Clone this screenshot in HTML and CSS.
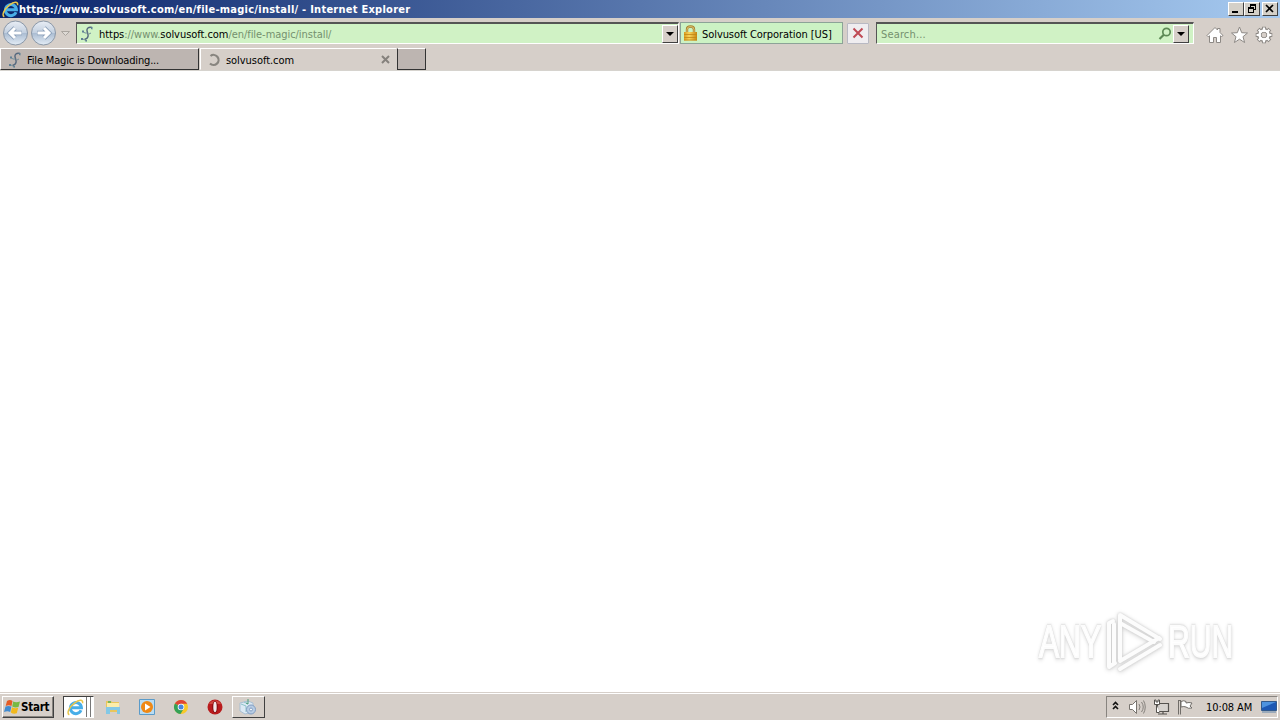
FILE: index.html
```html
<!DOCTYPE html>
<html lang="en">

<head>
    <meta charset="UTF-8">
    <title>https://www.solvusoft.com/en/file-magic/install/</title>
    <link rel="stylesheet" href="styles.css">
</head>

<body>

    <!-- shapes used more than once -->
    <svg class="defs" width="0" height="0">
        <defs>
            <linearGradient id="ball" x1="0" y1="0" x2="0" y2="1">
                <stop offset="0" stop-color="#e9eef5" />
                <stop offset=".48" stop-color="#c3d0e0" />
                <stop offset=".5" stop-color="#a9bbd1" />
                <stop offset="1" stop-color="#e4edf6" />
            </linearGradient>
            <linearGradient id="gold" x1="0" y1="0" x2="1" y2="0">
                <stop offset="0" stop-color="#d99a1c" />
                <stop offset=".4" stop-color="#f9d45c" />
                <stop offset="1" stop-color="#c78610" />
            </linearGradient>
            <symbol id="ie" viewBox="0 0 16 16">
                <path d="M13.200 10.600A5.200 5.200 0 1 1 13.600 8.300H4.500" fill="none" stroke="#48aee8" stroke-width="2.800" />
                <path d="M2.200 14.800C-.6 13.500 2 7.500 7 3.800C11 .8 15.500 0 14.600 4" fill="none" stroke="#e9c64a" stroke-width="1.400" />
            </symbol>
            <symbol id="solvu" viewBox="0 0 16 16">
                <path d="M13 1.500C9.500 .5 7.200 2.500 8.200 5.500S10.500 12 5.500 13.500" fill="none" stroke="#54687e" stroke-width="1.400" />
                <path d="M4 5.500l2 1.500 2.500 0M10 8l2-1M5.500 13.500l-2.500-.5M6 14l1 1.500M12 1.500l1 2" fill="none" stroke="#74909a" />
                <path d="M3 4.500h2v2H3zM2 12h2v2H2zM12 1h1.500v2H12zM6.500 14h1.500v1.500H6.500z" fill="#5f8095" />
            </symbol>
        </defs>
    </svg>

    <div class="titlebar">
        <svg class="title-icon" width="17" height="17"><use href="#ie" /></svg>
        <span class="title">https://www.solvusoft.com/en/file-magic/install/ - Internet Explorer</span>
        <div class="window-buttons">
            <div class="win-btn"><svg width="14" height="12"><path d="M3 8h6v2H3z" /></svg></div>
            <div class="win-btn"><svg width="14" height="12"><path d="M5 1h6v2H5zM10 3h1v4H9V6h1zM5 3h1v1H5zM3 4h6v2H3zM3 6h1v4H3zM8 6h1v4H8zM3 9h6v1H3z" /></svg></div>
            <div class="win-btn close"><svg width="14" height="12"><path d="M3 2l7 7M10 2L3 9" stroke="#000" stroke-width="1.700" /></svg></div>
        </div>
    </div>

    <div class="navbar">
        <svg class="nav-balls" width="76" height="30">
            <circle cx="15.500" cy="15" r="12" fill="url(#ball)" stroke="#8b98a8" />
            <circle cx="43.500" cy="15" r="12" fill="url(#ball)" stroke="#8b98a8" />
            <path d="M22 15H10M15 10L10 15L15 20" fill="none" stroke="#8a9fb9" stroke-width="4.600" />
            <path d="M21.500 15H10M15 10L10 15L15 20" fill="none" stroke="#fff" stroke-width="3" />
            <path d="M37 15h12M44 10L49 15L44 20" fill="none" stroke="#8a9fb9" stroke-width="4.600" />
            <path d="M37.500 15H49M44 10L49 15L44 20" fill="none" stroke="#fff" stroke-width="3" />
            <path d="M61.500 13.500h8l-4 4z" fill="#dedad5" stroke="#aaa59f" />
        </svg>
        <div class="address">
            <svg class="favicon" width="16" height="16"><use href="#solvu" /></svg>
            <span class="url">https<i>://www.</i>solvusoft.com<i>/en/file-magic/install/</i></span>
            <div class="drop"><svg width="8" height="4"><path d="M0 0h8L4 4z" /></svg></div>
        </div>
        <div class="cert">
            <svg width="15" height="16">
                <path d="M4 8V4.500Q4 1.500 7.500 1.500T11 4.500V8" fill="none" stroke="#a7822b" stroke-width="2.400" />
                <path d="M4 8V4.500Q4 1.500 7.500 1.500T11 4.500V8" fill="none" stroke="#e7cf85" stroke-width=".8" />
                <path d="M1 7h13v8.500H1z" fill="url(#gold)" />
                <path d="M1 9.500h13M1 12.500h13M1 15h13" stroke="#c08514" stroke-width=".8" />
            </svg>
            <span class="cert-name">Solvusoft Corporation [US]</span>
        </div>
        <div class="stop"><svg width="12" height="12"><path d="M1.500 1.500l9 9M10.500 1.500l-9 9" stroke="#bf4a55" stroke-width="2" /></svg></div>
        <div class="search">
            <span class="search-hint">Search...</span>
            <svg width="14" height="14"><circle cx="8.500" cy="5" r="3.700" fill="none" stroke="#5c8955" stroke-width="1.700" /><path d="M5.800 7.800L1.500 12" stroke="#5c8955" stroke-width="2.200" /></svg>
            <div class="drop"><svg width="8" height="4"><path d="M0 0h8L4 4z" /></svg></div>
        </div>
        <svg class="tools" width="70" height="20" fill="#fff" stroke="#8d8985">
            <path d="M1 10.500L9 2.500L11.500 5V3.500h2.500V7.500L17 10.500L15.500 11.500L14.500 10.800V17.500H10.500V12.500H7.500V17.500H3.500V10.800L2.300 11.800z" />
            <path d="M33.500 2L35.700 7.700L41.500 8L37 11.700L38.600 17.500L33.500 14.200L28.400 17.500L30 11.700L25.500 8L31.300 7.700z" />
            <g fill="none">
                <path d="M58 1.700v16.600M49.700 10h16.600M52.100 4.100l11.800 11.800M63.900 4.100L52.100 15.900" stroke-width="4" />
                <circle cx="58" cy="10" r="4.800" stroke-width="4.400" />
                <path d="M58 2.500v15M50.500 10h15M52.700 4.700l10.600 10.600M63.300 4.700L52.700 15.300" stroke="#fff" stroke-width="2.200" />
            </g>
            <circle cx="58" cy="10" r="2.900" fill="#d6cfc9" />
            <circle cx="58" cy="10" r="4.500" fill="none" stroke="#fff" stroke-width="2.400" />
        </svg>
    </div>

    <div class="tabs">
        <div class="tab">
            <svg class="favicon" width="16" height="16"><use href="#solvu" /></svg>
            <span class="tab-first">File Magic is Downloading...</span>
        </div>
        <div class="tab active">
            <svg width="14" height="14"><path d="M3.500 3A5 5 0 1 1 3 10.500" fill="none" stroke="#88857f" stroke-width="2.200" /></svg>
            <span class="tab-second">solvusoft.com</span>
            <svg class="tab-close" width="9" height="9"><path d="M1 1l7 7M8 1L1 8" stroke="#85817c" stroke-width="2" /></svg>
        </div>
        <div class="tab new-tab"></div>
    </div>

    <div class="page">
        <div class="watermark">
            <span class="any">ANY</span>
            <svg class="play" width="64" height="68">
                <path d="M18 52V8L58 32" />
                <path d="M18 16L52 35" />
                <path d="M11 14L7 16V60L13 56" />
                <path d="M12 17V56" />
                <path d="M18 54L57 31" />
                <path d="M18 62L58 38" />
            </svg>
            <span class="run">RUN</span>
        </div>
    </div>

    <div class="taskbar">
        <div class="start">
            <svg width="17" height="16">
                <path d="M3 2Q6 0 8.500 2L7.500 7Q5 5.500 1.700 7z" fill="#e45b25" />
                <path d="M9.200 2.500Q12 4 16 2.500L14.500 8Q11 9 8.200 7.500z" fill="#77b943" />
                <path d="M1.500 7.600Q4.500 6.200 7.400 7.600L6.200 13Q3.500 11.500 0 13z" fill="#418bd0" />
                <path d="M8 8.200Q11 9.800 14.200 8.700L12.800 14.300Q9.500 15.500 6.800 13.500z" fill="#f2b91d" />
            </svg>
            <span class="start-label">Start</span>
        </div>
        <div class="task-ie"><svg width="17" height="17"><use href="#ie" /></svg></div>
        <div class="quick">
            <!-- explorer -->
            <svg width="16" height="16">
                <path d="M1 2h5l1 1h7v10H1z" fill="#e8c65c" />
                <path d="M2 4h12v5H2z" fill="#fbedaa" />
                <path d="M3 2h3v2H3z" fill="#78b65a" />
                <path d="M1 8h14v7h-3v-4H5v4H1z" fill="#82c8e6" />
            </svg>
            <!-- media player -->
            <svg width="16" height="16">
                <path d="M.5.5h15v15H.5z" fill="#b9dcf3" stroke="#5b9bc9" />
                <circle cx="8" cy="8" r="6" fill="#ef8815" />
                <path d="M6 4.500L11.500 8L6 11.500z" fill="#fff" />
            </svg>
            <!-- chrome -->
            <svg width="16" height="16">
                <circle cx="8" cy="8" r="7" fill="#f8c928" />
                <path d="M8 8L1.900 4.500A7 7 0 0 1 14.200 4.800H8z" fill="#df4435" />
                <path d="M8 8L1.900 4.500A7 7 0 0 0 7.500 15L10.500 10z" fill="#35a157" />
                <circle cx="8" cy="8" r="3.300" fill="#fff" />
                <circle cx="8" cy="8" r="2.500" fill="#4886dc" />
            </svg>
            <!-- opera -->
            <svg width="16" height="16">
                <circle cx="8" cy="8" r="7.500" fill="#b91b1c" />
                <path d="M2 5a7 7 0 0 1 12 0z" fill="#d04a40" />
                <ellipse cx="8" cy="8" rx="2.800" ry="5.900" fill="#7f0c10" />
                <ellipse cx="8" cy="8" rx="1.700" ry="5.200" fill="#f3e9e7" />
            </svg>
        </div>
        <div class="task-app">
            <svg width="18" height="18">
                <path d="M1 5l8-2 5 2v9l-8 2-5-3z" fill="#dce9f4" stroke="#a9bfd3" />
                <path d="M2 6l5 2v6M5 4l4 2" fill="none" stroke="#8cc3c9" />
                <path d="M9 1v5l-2-1" fill="none" stroke="#4d9a78" />
                <circle cx="12" cy="11.500" r="4.500" fill="#b7cce4" stroke="#829dc2" />
                <circle cx="12" cy="11.500" r="1.500" fill="#f4f8fc" stroke="#829dc2" />
            </svg>
        </div>
        <div class="tray">
            <svg class="tray-icons" width="88" height="18" fill="none">
                <path d="M3 7l2.500-2.500L8 7M3 11l2.500-2.500L8 11" stroke="#111" stroke-width="1.600" />
                <path d="M19.500 6.500h3l4-4v13l-4-4h-3z" fill="#fff" stroke="#77736e" />
                <path d="M29 6q2 3 0 6M31.500 4q3.500 5 0 10M33.500 2.500q3.500 6.500 0 13" stroke="#85817c" />
                <path d="M47.500 5.500h11v8h-11zM48 16h9M53 14v2" fill="#d6d2ce" stroke="#55524e" stroke-width="1.200" />
                <path d="M44.500 2v4.500h5V2h-1.500v2h-2V2zM46.500 6.500v8h3" fill="#fff" stroke="#55524e" />
                <path d="M68.500 2v14.500M70.500 2v14.500M68 2.500h3" stroke="#716d69" />
                <path d="M71 3.500q3-1.500 5 0v1.500q3-1 6 0l-2 3 2 2q-4 1-6-1-2-1-5 0z" fill="#fff" stroke="#716d69" />
            </svg>
            <span class="clock">10:08 AM</span>
            <svg class="desktop" width="16" height="14">
                <path d="M.5 1.500h15v9H.5z" fill="#1d58b4" stroke="#335a8c" />
                <path d="M1 2h14L1 8z" fill="#4e93df" />
                <path d="M1 12h14" stroke="#9baaba" stroke-width="2" />
            </svg>
        </div>
    </div>

</body>

</html>
```
FILE: styles.css
```css
* {
    box-sizing: border-box;
}

body {
    margin: 0;
    width: 1280px;
    height: 720px;
    overflow: hidden;
    display: flex;
    flex-direction: column;
    background: #fff;
    color: #000;
    font-family: "DejaVu Sans Condensed", "DejaVu Sans", sans-serif;
    font-stretch: condensed;
    font-size: 11px;
    white-space: nowrap;
}

svg {
    display: block;
    flex: none;
}

.defs {
    position: absolute;
}

/* title bar */
.titlebar {
    display: flex;
    align-items: center;
    height: 18px;
    padding: 0 2px;
    background: linear-gradient(to right, #0a246a, #a6caf0);
}

.title {
    color: #fff;
    font-weight: bold;
    letter-spacing: 0.255px;
}

.window-buttons {
    display: flex;
    margin-left: auto;
}

.win-btn {
    width: 16px;
    height: 14px;
    background: #d4d0c8;
    border: 1px solid;
    border-color: #fff #404040 #404040 #fff;
}

.win-btn.close {
    margin-left: 2px;
}

/* address row */
.navbar {
    display: flex;
    align-items: center;
    height: 30px;
    background: #d6cfc9;
}

.address,
.search {
    display: flex;
    align-items: center;
    height: 22px;
    background: #d0f2c5;
    border: 1px solid;
    border-color: #555 #fff #fff #555;
    border-top-width: 2px;
}

.address {
    width: 603px;
    padding-left: 2px;
}

.url {
    margin-left: 4px;
    padding-top: 1px;
    letter-spacing: -0.05px;
}

.url i {
    color: #74906e;
    font-style: normal;
}

.drop {
    display: flex;
    align-items: center;
    justify-content: center;
    width: 16px;
    height: 18px;
    background: #d6cfc9;
    border: 1px solid;
    border-color: #fff #404040 #404040 #fff;
}

.address .drop {
    margin-left: auto;
}

.cert {
    display: flex;
    align-items: center;
    width: 163px;
    height: 22px;
    margin-left: 1px;
    padding-left: 2px;
    background: #ccf2c4;
    border: 1px solid #8ca397;
}

.cert-name {
    margin-left: 4px;
    padding-top: 2px;
    letter-spacing: -0.07px;
}

.stop {
    display: flex;
    align-items: center;
    justify-content: center;
    width: 22px;
    height: 21px;
    margin-left: 4px;
    background: #efedf0;
    border: 1px solid #b8b9c3;
    border-radius: 1px;
}

.search {
    width: 318px;
    margin-left: 7px;
    padding-left: 4px;
}

.search-hint {
    flex: 1;
    padding-top: 1px;
    color: #74906e;
    letter-spacing: 0.15px;
}

.search .drop {
    margin: 0 4px 0 1px;
}

.tools {
    margin: 3px 0 0 12px;
}

/* tabs */
.tabs {
    display: flex;
    height: 23px;
    background: #d6cfc9;
    border-bottom: 1px solid #d6d3ce;
}

.tab {
    display: flex;
    align-items: center;
    width: 199px;
    height: 22px;
    padding: 1px 0 0 6px;
    background: #bdb5b1;
    border: 1px solid;
    border-color: #fff #333 #333 #fff;
}

.tab.active {
    width: 197px;
    margin-left: 1px;
    background: #d6cfc9;
    border-color: #fff #d6cfc9 #d6cfc9 #fff;
}

.tab-first,
.tab-second {
    padding-top: 2px;
}

.tab-first {
    margin-left: 4px;
    letter-spacing: -0.17px;
}

.tab-second {
    margin-left: 5px;
    letter-spacing: -0.05px;
}

.tab-close {
    margin: 0 6px 0 auto;
}

.tab.new-tab {
    width: 29px;
    border-left-color: #333;
}

/* page */
.page {
    position: relative;
    flex: 1;
    background: #fff;
}

.watermark {
    position: absolute;
    left: 1039px;
    top: 535px;
    display: flex;
    align-items: center;
    color: #fff;
    font-family: "Liberation Sans", Arial, sans-serif;
    font-size: 45px;
    line-height: 68px;
}

.any,
.run {
    width: 63px;
    padding-top: 2px;
    transform: scaleX(0.67);
    transform-origin: left;
    -webkit-text-stroke: 2px #fcfcfc;
    filter: drop-shadow(0 0 1px #ccc) drop-shadow(0 1px 2px #d8d8d8);
}

.run {
    margin-left: 2px;
}

.play {
    fill: none;
    stroke: #fcfcfc;
    stroke-width: 4px;
    stroke-linejoin: round;
    stroke-linecap: round;
    filter: drop-shadow(0 0 1px #ccc) drop-shadow(0 1px 2px #d8d8d8);
}

/* taskbar */
.taskbar {
    display: flex;
    align-items: center;
    height: 28px;
    padding: 1px 2px 0;
    background: #d6cfc9;
    border-top: 1px solid #d6cfc9;
    box-shadow: inset 0 1px #fff;
}

.start {
    display: flex;
    align-items: center;
    width: 52px;
    height: 22px;
    padding-left: 1px;
    border: 1px solid;
    border-color: #fff #404040 #404040 #fff;
    box-shadow: inset -1px -1px #88847f;
}

.start-label {
    font-size: 11.5px;
    font-weight: bold;
    letter-spacing: -0.25px;
}

.task-ie {
    display: flex;
    align-items: center;
    width: 31px;
    height: 22px;
    margin-left: 9px;
    padding-left: 3px;
    background: linear-gradient(to right, #fff 22px, #777 22px 23px, #fff 23px 26px, #777 26px 27px, #fff 27px);
    border: 1px solid;
    border-color: #404040 #fff #fff #404040;
}

.quick {
    display: flex;
    gap: 18px;
    margin-left: 11px;
}

.task-app {
    display: flex;
    align-items: center;
    width: 33px;
    height: 22px;
    margin-left: 9px;
    padding-left: 6px;
    border: 1px solid;
    border-color: #fff #404040 #404040 #fff;
}

.tray {
    display: flex;
    align-items: center;
    width: 172px;
    height: 22px;
    margin-left: auto;
    padding-left: 3px;
    border: 1px solid;
    border-color: #88847f #fff #fff #88847f;
}

.clock {
    margin-left: 8px;
    letter-spacing: -0.1px;
}

.desktop {
    margin-left: auto;
}
```
